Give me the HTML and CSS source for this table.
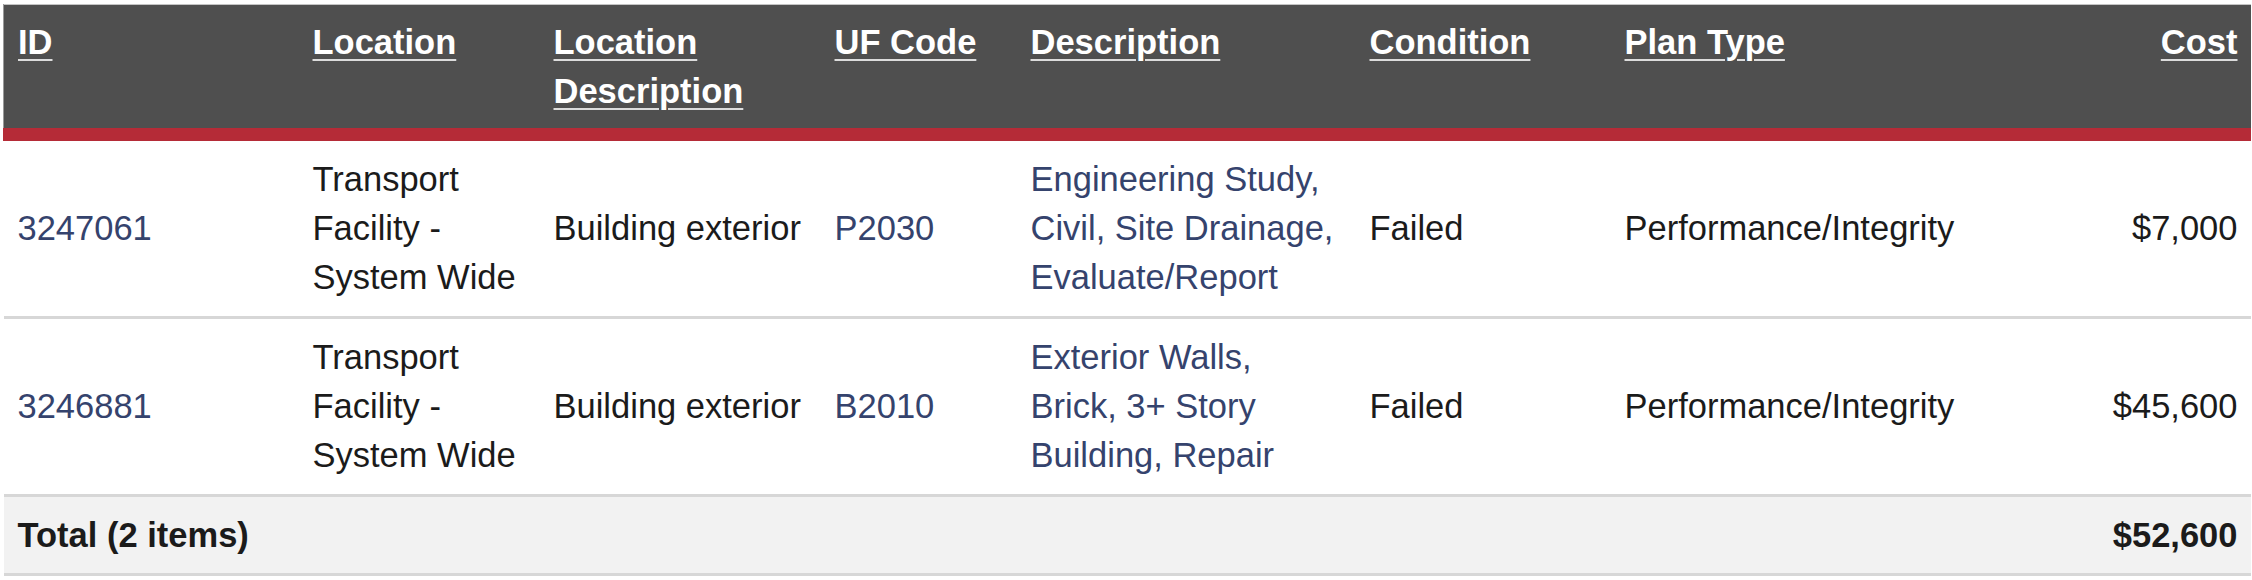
FILE: index.html
```html
<!DOCTYPE html>
<html lang="en">
<head>
<meta charset="utf-8">
<title>Plan items</title>
<link rel="stylesheet" href="styles.css">
</head>
<body>
<div class="wrap">
<table class="grid">
  <colgroup>
    <col class="c-id"><col class="c-loc"><col class="c-locdesc"><col class="c-uf">
    <col class="c-desc"><col class="c-cond"><col class="c-plan"><col class="c-cost">
  </colgroup>
  <thead>
    <tr>
      <th class="first"><a href="#">ID</a></th>
      <th><a href="#">Location</a></th>
      <th><a href="#">Location Description</a></th>
      <th><a href="#">UF Code</a></th>
      <th><a href="#">Description</a></th>
      <th><a href="#">Condition</a></th>
      <th><a href="#">Plan Type</a></th>
      <th class="num"><a href="#">Cost</a></th>
    </tr>
  </thead>
  <tbody>
    <tr>
      <td class="link">3247061</td>
      <td>Transport Facility - System Wide</td>
      <td>Building exterior</td>
      <td class="link">P2030</td>
      <td class="link desc">Engineering Study, Civil, Site Drainage, Evaluate/Report</td>
      <td>Failed</td>
      <td>Performance/Integrity</td>
      <td class="num">$7,000</td>
    </tr>
    <tr>
      <td class="link">3246881</td>
      <td>Transport Facility - System Wide</td>
      <td>Building exterior</td>
      <td class="link">B2010</td>
      <td class="link desc">Exterior Walls, Brick, 3+ Story Building, Repair</td>
      <td>Failed</td>
      <td>Performance/Integrity</td>
      <td class="num">$45,600</td>
    </tr>
  </tbody>
  <tfoot>
    <tr>
      <td colspan="7">Total (2 items)</td>
      <td class="num">$52,600</td>
    </tr>
  </tfoot>
</table>
</div>
</body>
</html>
```
FILE: styles.css
```css
html, body {
  margin: 0;
  padding: 0;
  background: #ffffff;
}

.wrap {
  padding: 4px 2px 0 3px;
}

.grid {
  width: 2247px;
  table-layout: fixed;
  border-collapse: collapse;
  font-family: "Liberation Sans", Arial, sans-serif;
  font-size: 34.5px;
  line-height: 49px;
  color: #1b1b1b;
}

.c-id { width: 295px; }
.c-loc { width: 241px; }
.c-locdesc { width: 281px; }
.c-uf { width: 196px; }
.c-desc { width: 339px; }
.c-cond { width: 255px; }
.c-plan { width: 440px; }
.c-cost { width: 200px; }

.grid thead tr {
  border-top: 1px solid #c4c4c4;
}

.grid th {
  background: #4f4f4f;
  text-align: left;
  vertical-align: top;
  font-weight: bold;
  padding: 13px 14px 12px 14px;
  border-bottom: 13px solid #b52b37;
}

.grid th.first {
  border-left: 1px solid #9a9a9a;
}

.grid th a {
  color: #ffffff;
  text-decoration: underline;
  text-decoration-color: #dcdcdc;
  text-decoration-thickness: 2px;
  text-underline-offset: 5px;
}

.grid th.num {
  text-align: right;
  padding-right: 13px;
}

.grid td {
  vertical-align: middle;
  padding: 14px 14px 14px 14px;
  border-bottom: 3px solid #d7d7d7;
}

.grid td.num {
  text-align: right;
  padding-right: 13px;
}

.grid td.desc {
  padding-right: 15px;
}

.grid td.link {
  color: #35436d;
}

.grid tfoot td {
  background: #f2f2f2;
  font-weight: bold;
  padding-top: 14px;
  padding-bottom: 13px;
}
```
